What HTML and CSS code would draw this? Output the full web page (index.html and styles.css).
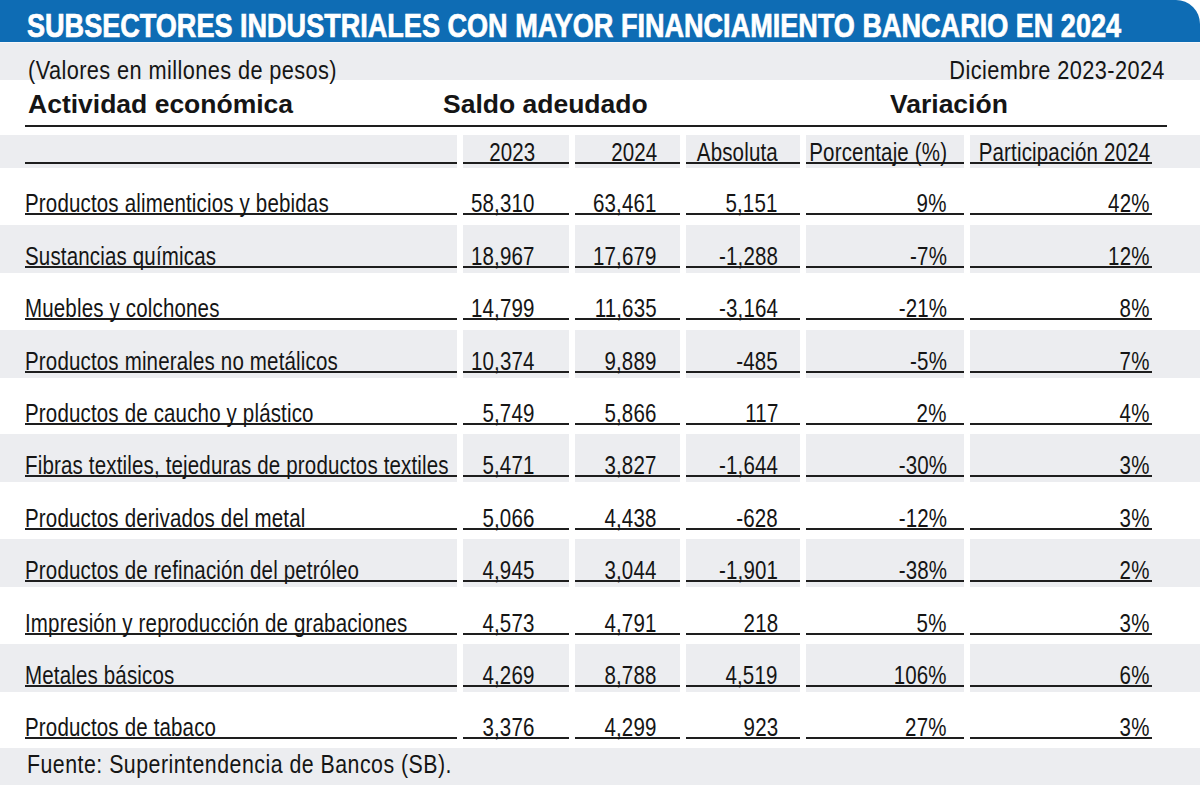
FILE: index.html
```html
<!DOCTYPE html>
<html lang="es">
<head>
<meta charset="utf-8">
<title>Subsectores industriales con mayor financiamiento bancario en 2024</title>
<link rel="stylesheet" href="styles.css">
</head>
<body>
<div class="card">
  <header class="title-bar">
    <h1><span class="narrow">SUBSECTORES INDUSTRIALES CON MAYOR FINANCIAMIENTO BANCARIO EN 2024</span></h1>
  </header>
  <div class="meta">
    <span class="narrow">(Valores en millones de pesos)</span>
    <span class="narrow end">Diciembre 2023-2024</span>
  </div>
  <div class="groups">
    <div class="groups-inner">
      <span>Actividad económica</span>
      <span>Saldo adeudado</span>
      <span>Variación</span>
    </div>
  </div>
  <div class="table">
    <div class="row head alt">
      <div class="cell c1"><div class="v"></div></div>
      <div class="cell c2"><div class="v"><span>2023</span></div></div>
      <div class="cell c3"><div class="v"><span>2024</span></div></div>
      <div class="cell c4"><div class="v"><span>Absoluta</span></div></div>
      <div class="cell c5"><div class="v"><span>Porcentaje (%)</span></div></div>
      <div class="cell c6"><div class="v"><span>Participación 2024</span></div></div>
    </div>
    <div class="row">
      <div class="cell c1"><div class="v"><span>Productos alimenticios y bebidas</span></div></div>
      <div class="cell c2"><div class="v"><span>58,310</span></div></div>
      <div class="cell c3"><div class="v"><span>63,461</span></div></div>
      <div class="cell c4"><div class="v"><span>5,151</span></div></div>
      <div class="cell c5"><div class="v"><span>9%</span></div></div>
      <div class="cell c6"><div class="v"><span>42%</span></div></div>
    </div>
    <div class="row alt">
      <div class="cell c1"><div class="v"><span>Sustancias químicas</span></div></div>
      <div class="cell c2"><div class="v"><span>18,967</span></div></div>
      <div class="cell c3"><div class="v"><span>17,679</span></div></div>
      <div class="cell c4"><div class="v"><span>-1,288</span></div></div>
      <div class="cell c5"><div class="v"><span>-7%</span></div></div>
      <div class="cell c6"><div class="v"><span>12%</span></div></div>
    </div>
    <div class="row">
      <div class="cell c1"><div class="v"><span>Muebles y colchones</span></div></div>
      <div class="cell c2"><div class="v"><span>14,799</span></div></div>
      <div class="cell c3"><div class="v"><span>11,635</span></div></div>
      <div class="cell c4"><div class="v"><span>-3,164</span></div></div>
      <div class="cell c5"><div class="v"><span>-21%</span></div></div>
      <div class="cell c6"><div class="v"><span>8%</span></div></div>
    </div>
    <div class="row alt">
      <div class="cell c1"><div class="v"><span>Productos minerales no metálicos</span></div></div>
      <div class="cell c2"><div class="v"><span>10,374</span></div></div>
      <div class="cell c3"><div class="v"><span>9,889</span></div></div>
      <div class="cell c4"><div class="v"><span>-485</span></div></div>
      <div class="cell c5"><div class="v"><span>-5%</span></div></div>
      <div class="cell c6"><div class="v"><span>7%</span></div></div>
    </div>
    <div class="row">
      <div class="cell c1"><div class="v"><span>Productos de caucho y plástico</span></div></div>
      <div class="cell c2"><div class="v"><span>5,749</span></div></div>
      <div class="cell c3"><div class="v"><span>5,866</span></div></div>
      <div class="cell c4"><div class="v"><span>117</span></div></div>
      <div class="cell c5"><div class="v"><span>2%</span></div></div>
      <div class="cell c6"><div class="v"><span>4%</span></div></div>
    </div>
    <div class="row alt">
      <div class="cell c1"><div class="v"><span>Fibras textiles, tejeduras de productos textiles</span></div></div>
      <div class="cell c2"><div class="v"><span>5,471</span></div></div>
      <div class="cell c3"><div class="v"><span>3,827</span></div></div>
      <div class="cell c4"><div class="v"><span>-1,644</span></div></div>
      <div class="cell c5"><div class="v"><span>-30%</span></div></div>
      <div class="cell c6"><div class="v"><span>3%</span></div></div>
    </div>
    <div class="row">
      <div class="cell c1"><div class="v"><span>Productos derivados del metal</span></div></div>
      <div class="cell c2"><div class="v"><span>5,066</span></div></div>
      <div class="cell c3"><div class="v"><span>4,438</span></div></div>
      <div class="cell c4"><div class="v"><span>-628</span></div></div>
      <div class="cell c5"><div class="v"><span>-12%</span></div></div>
      <div class="cell c6"><div class="v"><span>3%</span></div></div>
    </div>
    <div class="row alt">
      <div class="cell c1"><div class="v"><span>Productos de refinación del petróleo</span></div></div>
      <div class="cell c2"><div class="v"><span>4,945</span></div></div>
      <div class="cell c3"><div class="v"><span>3,044</span></div></div>
      <div class="cell c4"><div class="v"><span>-1,901</span></div></div>
      <div class="cell c5"><div class="v"><span>-38%</span></div></div>
      <div class="cell c6"><div class="v"><span>2%</span></div></div>
    </div>
    <div class="row">
      <div class="cell c1"><div class="v"><span>Impresión y reproducción de grabaciones</span></div></div>
      <div class="cell c2"><div class="v"><span>4,573</span></div></div>
      <div class="cell c3"><div class="v"><span>4,791</span></div></div>
      <div class="cell c4"><div class="v"><span>218</span></div></div>
      <div class="cell c5"><div class="v"><span>5%</span></div></div>
      <div class="cell c6"><div class="v"><span>3%</span></div></div>
    </div>
    <div class="row alt">
      <div class="cell c1"><div class="v"><span>Metales básicos</span></div></div>
      <div class="cell c2"><div class="v"><span>4,269</span></div></div>
      <div class="cell c3"><div class="v"><span>8,788</span></div></div>
      <div class="cell c4"><div class="v"><span>4,519</span></div></div>
      <div class="cell c5"><div class="v"><span>106%</span></div></div>
      <div class="cell c6"><div class="v"><span>6%</span></div></div>
    </div>
    <div class="row">
      <div class="cell c1"><div class="v"><span>Productos de tabaco</span></div></div>
      <div class="cell c2"><div class="v"><span>3,376</span></div></div>
      <div class="cell c3"><div class="v"><span>4,299</span></div></div>
      <div class="cell c4"><div class="v"><span>923</span></div></div>
      <div class="cell c5"><div class="v"><span>27%</span></div></div>
      <div class="cell c6"><div class="v"><span>3%</span></div></div>
    </div>
  </div>
  <footer class="source"><span class="narrow">Fuente: Superintendencia de Bancos (SB).</span></footer>
</div>
</body>
</html>
```

FILE: styles.css
```css
* {
  box-sizing: border-box;
}

html, body {
  margin: 0;
  padding: 0;
  background: #ffffff;
}

body {
  width: 1200px;
  height: 785px;
  overflow: hidden;
  color: #151515;
  font-family: "Liberation Sans", Arial, sans-serif;
}

/* The reference uses a condensed grotesque; Liberation Sans is narrowed
   to Arial Narrow proportions. */
.narrow {
  display: inline-block;
  transform: scaleX(0.82);
  transform-origin: left bottom;
  white-space: nowrap;
}

.narrow.end {
  transform-origin: right bottom;
}

.card {
  width: 1200px;
  display: flex;
  flex-direction: column;
}

.title-bar {
  height: 42px;
  background: #0e6cb4;
  border-top-right-radius: 24px;
  padding: 9px 0 0 27px;
}

.title-bar h1 {
  margin: 0;
  font-weight: 700;
  font-size: 33px;
  line-height: 33px;
  color: #ffffff;
  -webkit-text-stroke: 0.7px #ffffff;
  white-space: nowrap;
}

.title-bar h1 .narrow {
  margin-right: -250px;
}

.meta {
  height: 38px;
  background: #ecedf0;
  border-top: 1px solid #f6f7f9;
  display: flex;
  justify-content: space-between;
  align-items: flex-end;
  padding: 0 35px 0 28px;
  font-size: 26.5px;
  line-height: 20px;
  letter-spacing: 0.5px;
}

.groups {
  height: 55px;
  padding: 0 33px 0 25px;
}

.groups-inner {
  height: 47px;
  border-bottom: 2px solid #1e1e1e;
  display: grid;
  grid-template-columns: 415px 447px 1fr;
  align-items: end;
  padding: 0 0 11px 3px;
  font-weight: 700;
  font-size: 26.5px;
  line-height: 20px;
}

.table {
  display: flex;
  flex-direction: column;
  gap: 4.4px;
}

.row {
  display: grid;
  grid-template-columns: 457px 106px 105px 114px 158px 1fr;
  column-gap: 6px;
  height: 48px;
}

.row.head {
  height: 33px;
}

.cell {
  display: flex;
  align-items: flex-end;
  padding-bottom: 5px;
  min-width: 0;
}

.row.head .cell {
  padding-bottom: 4px;
}

.row.alt .cell {
  background: #ecedf0;
}

.v {
  flex: 1;
  min-width: 0;
  height: 22px;
  display: flex;
  justify-content: flex-end;
  align-items: flex-end;
  border-bottom: 2px solid #1e1e1e;
  font-size: 25px;
  line-height: 20px;
  letter-spacing: 0.2px;
  white-space: nowrap;
}

.v span {
  flex: none;
  display: block;
  transform: scaleX(0.82);
  transform-origin: right bottom;
}

.c1 {
  padding-left: 25px;
}

.c1 .v {
  justify-content: flex-start;
}

.c1 .v span {
  transform-origin: left bottom;
}

.c2 .v { padding-right: 34px; }
.c3 .v { padding-right: 23px; }
.c4 .v { padding-right: 22px; }
.c5 .v { padding-right: 17px; }
.c6 { padding-right: 48px; }
.c6 .v { padding-right: 2px; }

.source {
  margin-top: 3.6px;
  height: 37px;
  background: #ecedf0;
  display: flex;
  align-items: flex-end;
  padding: 0 0 11px 27px;
  font-size: 26px;
  line-height: 20px;
  letter-spacing: 0.6px;
}
```
